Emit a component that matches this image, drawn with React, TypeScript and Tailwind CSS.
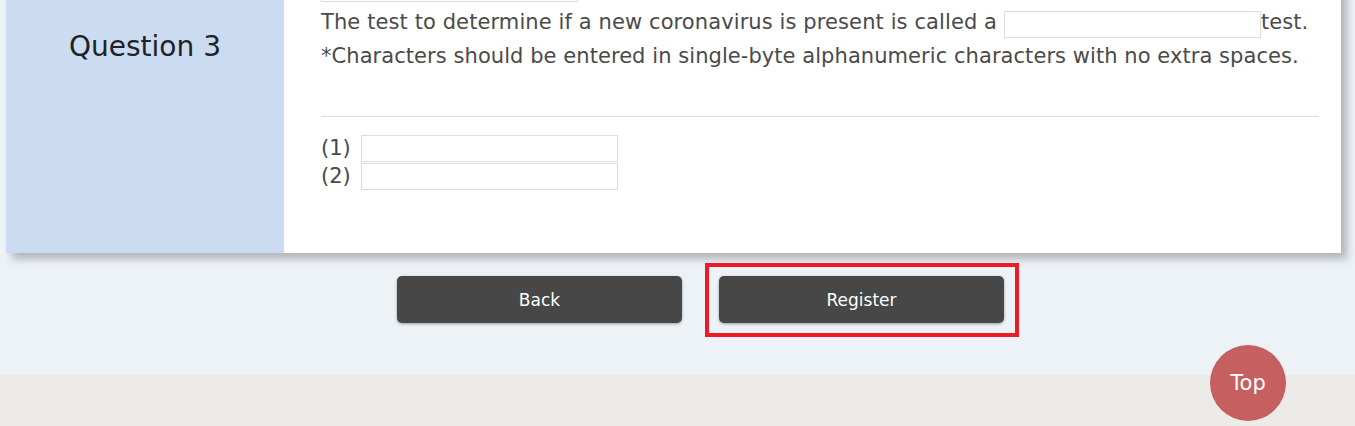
import React from 'react';

const font = { fontFamily: '"DejaVu Sans", Verdana, sans-serif' };

const Field = ({ className = '' }: { className?: string }) => (
  <input type="text" className={`h-[27px] w-[257px] border border-[#dcdcdc] bg-white outline-none ${className}`} />
);

const App = () => {
  return (
    <div className="relative h-[426px] overflow-hidden bg-[#edf2f7]" style={font}>
      <div className="ml-[6px] mt-[-40px] flex w-[1335px] bg-white shadow-[6px_6px_8px_rgba(0,0,0,0.25)]">
        <div className="w-[278px] shrink-0 bg-[#cbdcf2] pt-[66px] text-center text-[28px] leading-[42px] text-[#222]">
          Question 3
        </div>
        <div className="flex-1 pb-[63px] pl-[37px] pr-[22px] pt-[15px] text-[21px] text-[#4a4a4a]">
          <Field className="block" />
          <div className="mt-[3px] h-[34px] whitespace-nowrap leading-[34px] tracking-[0.1px]">
            The test to determine if a new coronavirus is present is called a{' '}
            <Field className="align-[-2px]" />test.
          </div>
          <div className="h-[34px] whitespace-nowrap leading-[34px] tracking-[0.06px]">
            *Characters should be entered in single-byte alphanumeric characters with no extra spaces.
          </div>
          <div className="mt-[43px] h-px bg-[#dedede]" />
          <div className="mt-[18px] flex flex-col gap-[1px]">
            {['(1)', '(2)'].map((label) => (
              <div key={label} className="flex h-[27px] items-center">
                <span className="w-[40px] leading-[27px]">{label}</span>
                <Field />
              </div>
            ))}
          </div>
        </div>
      </div>

      <div className="ml-[397px] mt-[23px] flex gap-[37px]">
        <button className="h-[47px] w-[285px] rounded-[5px] bg-[#464746] pt-[3px] text-[17px] text-white shadow-[0_1px_3px_rgba(0,0,0,0.35)]">
          Back
        </button>
        <div className="relative">
          <button className="h-[47px] w-[285px] rounded-[5px] bg-[#464746] pt-[3px] text-[17px] text-white shadow-[0_1px_3px_rgba(0,0,0,0.35)]">
            Register
          </button>
          <div className="pointer-events-none absolute left-[-14px] top-[-13px] h-[74px] w-[314px] border-4 border-[#ed1c24]" />
        </div>
      </div>

      <div className="mt-[52px] h-[60px] bg-[#edebe8]" />

      <button className="absolute left-[1210px] top-[345px] flex h-[76px] w-[76px] items-center justify-center rounded-full bg-[#c65f5f] pt-[2px] text-[21px] text-white">
        Top
      </button>
    </div>
  );
};

export default App;
